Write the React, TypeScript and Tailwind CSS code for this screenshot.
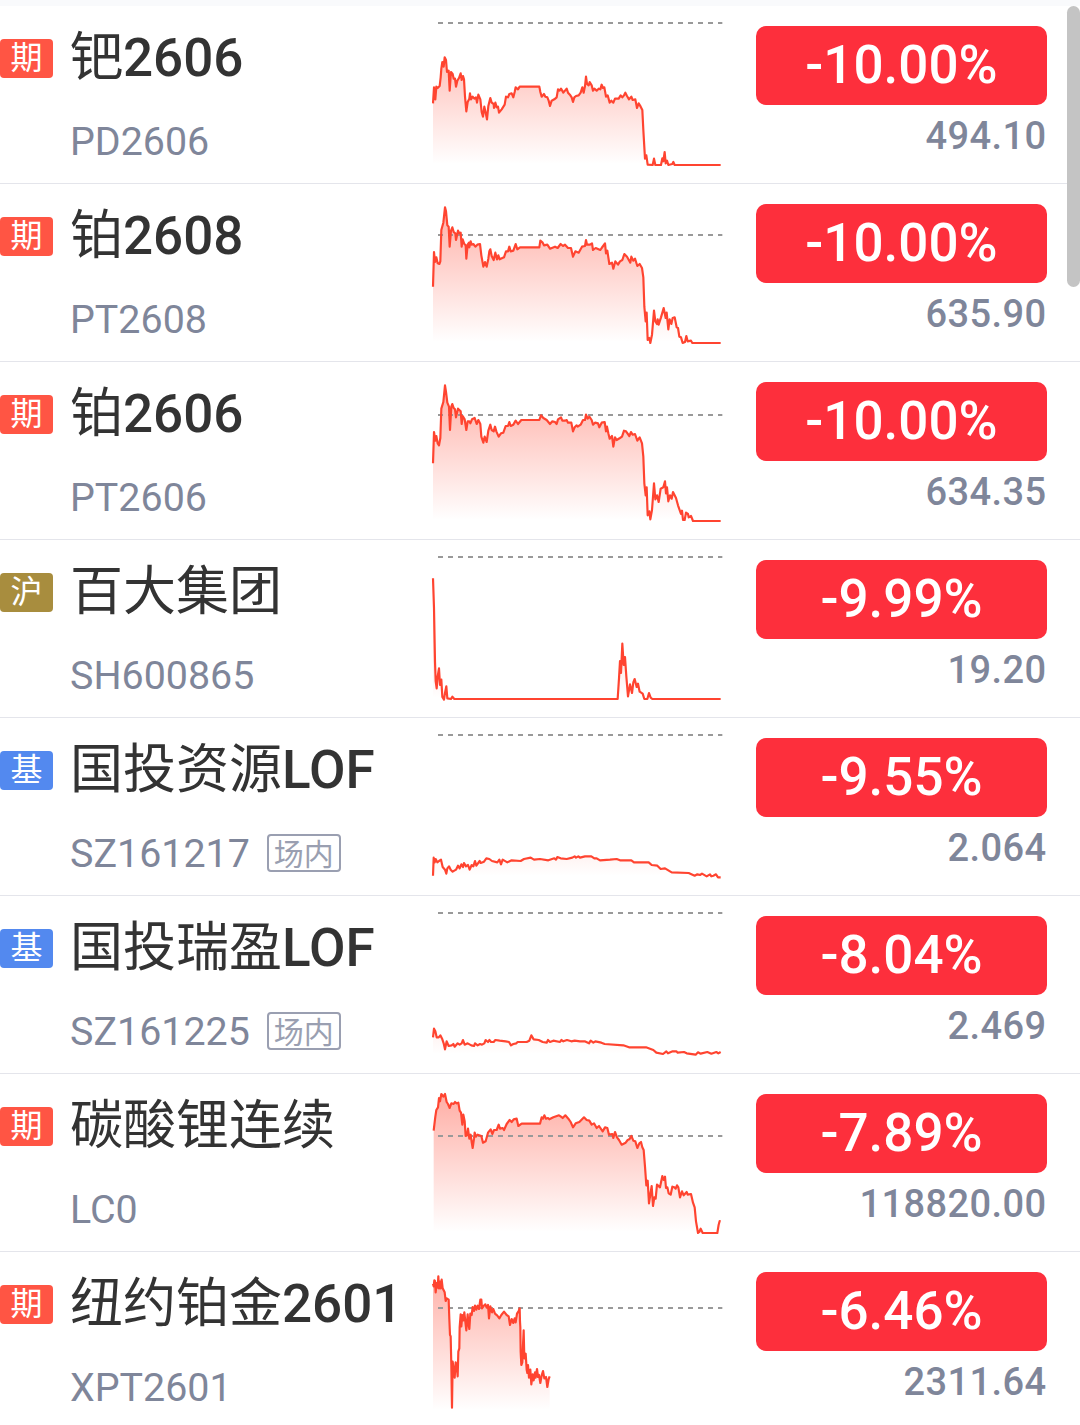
import React from "react";
import clsx from "clsx";

type Market = "期" | "沪" | "基";

interface Quote {
  market: Market;
  name: string;
  // latin tail of the name, set in a heavier weight
  suffix?: string;
  code: string;
  onExchange?: boolean;
  change: string;
  price: string;
  // vertical shift of the trend inside the row, in chart units (3 per px)
  shift: number;
  prevClose: number;
  trend: string;
}

const marketColors: Record<Market, string> = {
  期: "bg-[#ff5544]",
  沪: "bg-[#a88d3e]",
  基: "bg-[#5389ef]",
};

const quotes: Quote[] = [
  {
    market: "期",
    name: "钯",
    suffix: "2606",
    code: "PD2606",
    change: "-10.00%",
    price: "494.10",
    shift: -18,
    prevClose: 69,
    trend:
      "39,310 42,262 46,298 49,260 53,264 59,258 62,232 64,206 67,186 71,200 74,172 78,180 81,216 86,212 89,272 93,216 98,222 101,236 105,236 108,260 112,242 117,234 122,220 125,240 129,228 132,238 135,290 139,334 143,306 148,296 150,280 153,298 158,290 163,296 168,292 171,308 175,284 181,298 185,336 189,350 193,320 197,338 201,358 205,318 211,294 215,308 221,312 222,324 226,308 230,322 234,320 237,338 245,328 254,314 258,290 264,292 268,282 275,280 280,292 284,276 287,262 294,268 299,260 358,260 361,276 365,290 372,282 376,290 382,292 386,302 390,318 395,302 403,298 410,292 414,268 419,272 423,266 430,278 435,272 440,266 444,278 451,286 455,292 459,306 463,292 468,288 476,286 482,278 487,262 491,278 495,258 498,230 501,252 506,256 509,246 515,256 519,272 523,266 530,272 536,266 541,268 545,254 549,264 553,262 558,290 563,286 569,308 574,302 580,308 585,296 596,296 602,286 607,292 612,286 616,278 621,288 627,298 634,290 638,300 646,298 651,324 656,310 662,320 667,330 670,390 675,476 679,466 683,494 698,495 702,476 706,495 723,495 727,475 730,484 734,456 737,490 741,482 745,495 757,492 760,486 764,495 902,495",
  },
  {
    market: "期",
    name: "铂",
    suffix: "2608",
    code: "PT2608",
    change: "-10.00%",
    price: "635.90",
    shift: 18,
    prevClose: 135,
    trend:
      "39,290 42,186 45,216 49,202 53,220 58,222 61,214 64,120 70,98 75,52 78,64 82,106 86,110 89,170 93,122 97,112 101,126 106,130 108,150 114,122 118,130 122,128 125,170 128,148 133,162 137,166 139,206 143,164 147,158 148,172 152,154 155,164 160,162 166,170 172,164 180,162 184,196 190,230 195,216 200,230 205,206 208,184 211,178 215,198 221,210 226,188 231,208 235,196 239,208 252,202 258,184 264,184 268,170 272,184 280,182 287,162 292,178 300,172 358,172 361,152 368,158 372,166 382,164 390,176 405,170 413,174 422,162 429,168 435,164 444,174 453,174 459,200 466,184 476,188 486,170 495,168 498,150 501,164 510,164 516,160 519,180 527,174 541,180 545,174 555,160 558,190 562,182 568,222 576,218 580,236 586,214 594,224 600,214 607,210 613,192 621,200 631,218 634,200 640,212 645,206 652,228 659,222 666,234 670,262 673,350 677,394 680,368 683,450 688,444 691,459 696,434 702,362 706,394 711,402 713,388 716,404 723,382 731,354 737,384 740,368 745,418 749,388 754,402 758,384 764,382 770,412 774,414 778,440 783,442 788,459 795,456 799,438 803,454 813,452 817,459 902,459",
  },
  {
    market: "期",
    name: "铂",
    suffix: "2606",
    code: "PT2606",
    change: "-10.00%",
    price: "634.35",
    shift: 24,
    prevClose: 135,
    trend:
      "39,280 42,186 46,212 49,198 53,220 57,226 61,204 64,116 70,96 75,46 78,66 82,98 87,110 90,180 94,110 97,102 101,114 105,118 108,142 114,116 122,124 125,162 128,138 134,148 139,180 143,154 148,154 151,160 156,148 164,144 170,162 175,150 181,162 184,200 190,218 194,200 200,216 205,182 211,164 215,180 221,184 225,170 229,184 236,200 243,190 250,188 257,168 264,168 268,156 272,168 280,164 287,152 294,162 304,150 358,150 363,136 370,144 380,150 390,162 397,154 405,156 410,162 414,148 423,142 427,152 435,152 440,150 444,158 454,158 459,184 464,172 470,166 473,170 482,164 489,150 495,150 498,134 503,146 508,140 515,150 519,164 525,158 534,160 538,172 545,158 554,156 558,184 561,170 565,190 569,206 576,198 580,230 585,202 590,210 600,204 606,200 612,182 618,184 628,198 633,186 638,194 645,192 652,212 659,202 666,220 670,260 673,340 677,376 680,352 683,436 688,424 691,448 696,420 702,340 706,388 711,376 716,396 722,356 730,352 735,334 738,370 741,352 745,394 750,376 755,386 759,366 768,384 774,406 783,432 786,422 789,450 794,450 798,428 804,432 806,442 813,438 819,453 902,453",
  },
  {
    market: "沪",
    name: "百大集团",
    code: "SH600865",
    change: "-9.99%",
    price: "19.20",
    shift: 15,
    prevClose: 36,
    trend:
      "39,100 42,190 45,350 47,408 50,430 53,394 57,370 60,420 64,404 67,456 72,464 75,444 79,424 82,460 93,462 97,455 103,462 593,462 597,400 600,348 603,384 607,296 611,360 615,336 619,394 624,454 630,418 636,444 640,412 644,402 650,426 654,416 659,440 668,446 673,462 682,462 687,444 692,458 697,462 902,462",
  },
  {
    market: "基",
    name: "国投资源",
    suffix: "LOF",
    code: "SZ161217",
    onExchange: true,
    change: "-9.55%",
    price: "2.064",
    shift: 21,
    prevClose: 30,
    trend:
      "39,452 41,398 44,412 47,402 52,412 57,408 63,404 68,426 75,434 79,446 82,430 87,424 92,434 98,440 108,434 114,422 119,430 124,418 129,426 132,414 138,424 144,420 149,434 155,420 160,424 165,408 169,422 179,408 182,414 192,410 199,400 208,402 216,408 232,412 238,404 243,418 248,404 262,412 275,406 302,408 312,402 332,398 342,404 360,402 385,406 403,400 408,404 412,396 422,400 440,402 457,398 464,394 468,398 475,394 480,398 495,394 514,394 523,400 530,400 540,406 570,404 590,402 600,406 634,406 642,412 686,412 695,420 712,422 722,432 735,430 755,442 806,444 824,452 832,448 840,450 846,446 860,454 870,448 874,454 880,452 888,448 894,457 902,457",
  },
  {
    market: "基",
    name: "国投瑞盈",
    suffix: "LOF",
    code: "SZ161225",
    onExchange: true,
    change: "-8.04%",
    price: "2.469",
    shift: 12,
    prevClose: 39,
    trend:
      "39,412 42,386 46,394 50,412 56,412 61,406 67,418 71,430 75,448 80,424 86,438 95,436 100,432 104,440 113,430 119,434 125,430 129,420 134,434 143,430 154,436 162,438 165,430 173,436 180,432 186,434 193,430 197,420 204,426 208,420 213,426 221,426 226,420 239,422 257,424 267,426 273,436 280,432 289,430 293,426 320,426 328,422 334,406 341,418 356,420 368,426 380,428 384,420 390,426 400,422 420,426 424,420 430,424 441,420 454,424 464,422 480,424 494,424 507,430 512,422 520,428 526,424 544,428 554,432 610,436 627,442 678,442 700,450 709,458 729,462 739,454 744,460 758,454 769,454 773,458 792,456 800,460 827,464 834,457 842,461 862,456 874,461 889,456 895,460 902,456",
  },
  {
    market: "期",
    name: "碳酸锂连续",
    code: "LC0",
    change: "-7.89%",
    price: "118820.00",
    shift: 18,
    prevClose: 168,
    trend:
      "41,152 46,110 49,90 54,82 57,54 60,64 64,42 70,50 75,42 80,66 84,72 89,84 94,70 101,72 105,66 110,70 115,68 119,92 123,98 127,134 130,104 134,124 137,168 141,166 144,146 148,176 152,164 155,186 158,204 162,176 164,158 168,170 173,164 184,168 189,188 197,184 204,158 212,148 217,162 222,150 230,150 236,134 240,146 248,144 252,150 260,132 269,120 275,126 281,118 290,116 295,138 305,131 360,131 365,112 369,116 373,106 378,116 384,114 388,118 400,112 417,106 423,110 428,114 436,106 445,116 452,126 459,142 467,130 478,126 492,112 500,120 508,122 515,134 522,130 530,144 537,138 548,154 555,142 562,144 567,164 577,162 580,174 585,156 591,172 597,180 605,194 617,188 623,180 628,178 634,168 640,182 646,184 652,204 658,190 663,186 667,202 671,210 675,260 679,316 683,302 687,370 691,344 695,318 699,378 703,352 707,356 711,314 720,322 727,288 731,300 735,290 738,324 742,322 746,340 752,344 757,320 763,322 767,326 771,316 775,322 780,352 786,334 791,346 800,336 803,344 813,342 819,368 824,382 828,424 834,459 838,456 842,446 848,459 892,459 896,434 899,423 902,423",
  },
  {
    market: "期",
    name: "纽约铂金",
    suffix: "2601",
    code: "XPT2601",
    change: "-6.46%",
    price: "2311.64",
    shift: 9,
    prevClose: 159,
    trend:
      "39,86 41,94 43,76 45,78 47,112 50,84 53,98 55,64 57,100 60,80 62,100 65,74 68,100 71,106 74,112 77,138 80,130 86,134 88,192 90,240 92,244 94,330 96,458 98,320 101,344 104,368 107,322 110,332 113,364 115,290 118,280 119,216 122,178 124,214 127,180 130,196 133,172 136,200 139,226 143,178 145,204 148,222 151,176 155,180 158,156 162,168 165,152 169,164 173,152 177,162 181,134 184,134 186,160 190,154 196,148 200,158 204,150 207,190 211,154 216,172 220,162 225,176 232,182 238,190 244,180 252,170 260,180 266,184 270,210 275,192 280,204 284,190 287,202 291,176 296,168 299,160 300,200 301,216 302,290 304,330 307,322 309,270 311,226 313,310 317,296 320,344 322,354 324,330 327,368 331,344 334,388 338,358 341,376 345,352 347,368 351,342 354,366 357,360 361,384 365,362 369,348 373,370 378,366 382,396 386,372 389,364",
  },
];

// Intraday trend with the previous close as a dashed line
function TrendChart({ quote, id }: { quote: Quote; id: string }) {
  const points = quote.trend.split(" ");
  const startX = points[0].split(",")[0];
  const endX = points[points.length - 1].split(",")[0];
  const bottom = 474;

  return (
    <svg viewBox="0 0 960 531" className="h-[177px] w-80 shrink-0" fill="none">
      <defs>
        <linearGradient id={id} gradientUnits="userSpaceOnUse" x1="0" y1="40" x2="0" y2="474">
          <stop offset="0" stopColor="#ff4632" stopOpacity="0.46" />
          <stop offset="1" stopColor="#ff4632" stopOpacity="0" />
        </linearGradient>
      </defs>
      <polygon
        points={`${startX},${bottom} ${points
          .map((p) => {
            const [x, y] = p.split(",").map(Number);
            return `${x},${y + quote.shift}`;
          })
          .join(" ")} ${endX},${bottom}`}
        fill={`url(#${id})`}
      />
      <g transform={`translate(0 ${quote.shift})`}>
        <line
          x1="54"
          x2="907"
          y1={quote.prevClose}
          y2={quote.prevClose}
          stroke="#999999"
          strokeWidth="6"
          strokeDasharray="15 15"
        />
        <polyline points={quote.trend} stroke="#ff4430" strokeWidth="6.5" strokeLinejoin="round" />
      </g>
    </svg>
  );
}

function QuoteRow({ quote, id }: { quote: Quote; id: string }) {
  return (
    <div className="flex h-[178px] border-b border-[#e4e5eb]">
      <div
        className={clsx(
          "mt-[33px] flex h-[39px] w-[53px] shrink-0 items-center justify-center rounded pb-0.5 text-[32px] leading-none text-white",
          marketColors[quote.market]
        )}
      >
        {quote.market}
      </div>

      <div className="ml-[17px] w-[350px] shrink-0 whitespace-nowrap">
        <div className="mt-[18px] h-[68px] text-[53px] leading-[68px] text-[#333333]">
          {quote.name}
          {quote.suffix && <span className="font-medium">{quote.suffix}</span>}
        </div>
        <div className="mt-[25px] flex h-[50px] items-center text-[39.4px] leading-[50px] text-[#7f869a]">
          {quote.code}
          {quote.onExchange && (
            <span className="-mt-0.5 ml-[17px] flex h-[38px] w-[74px] items-center justify-center rounded border-2 border-[#9a9fb1] pt-[3px] text-[30px] leading-none text-[#9a9fb1]">
              场内
            </span>
          )}
        </div>
      </div>

      <TrendChart quote={quote} id={id} />

      <div className="ml-4 w-[291px] shrink-0 pt-5">
        <div className="flex h-[79px] items-center justify-center rounded-[10px] bg-[#fd2f3c] text-[53px] leading-none font-medium text-white">
          {quote.change}
        </div>
        <div className="mt-[7px] pr-[0.6px] text-right text-[38px] leading-[48px] font-medium tracking-[0.4px] text-[#7f869a]">
          {quote.price}
        </div>
      </div>
    </div>
  );
}

export default function App() {
  return (
    <div className="relative h-[1425px] w-[1080px] overflow-hidden bg-white font-[Roboto,'Noto_Sans_CJK_SC',sans-serif]">
      <div className="h-1.5 bg-[#f9fafc]" />
      {quotes.map((quote) => (
        <QuoteRow key={quote.code} quote={quote} id={`fill-${quote.code}`} />
      ))}
      {/* scrollbar thumb */}
      <div className="absolute top-1.5 right-0 h-[281px] w-[13px] rounded-full bg-[#c4c4c4]" />
    </div>
  );
}
